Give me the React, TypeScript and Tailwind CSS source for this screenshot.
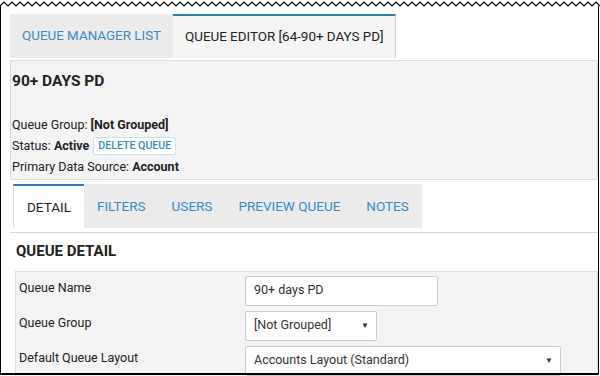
import React from "react";

const font = { fontFamily: "Roboto, 'Liberation Sans', sans-serif" };

function Zigzag() {
  // torn top edge of the screenshot
  let d = "M0 6";
  for (let x = 0; x < 600; x += 8) d += ` L${x + 4} 2 L${x + 8} 6`;
  return (
    <svg className="absolute left-0 top-0" width="600" height="10" viewBox="0 0 600 10">
      <path d={d} fill="none" stroke="#000" strokeWidth="1.2" />
    </svg>
  );
}

const subTabs = ["DETAIL", "FILTERS", "USERS", "PREVIEW QUEUE", "NOTES"];

export default function App() {
  return (
    <div className="relative w-[600px] h-[376px] overflow-hidden bg-white text-[#222]" style={font}>
      <Zigzag />
      <div className="absolute left-0 right-[1px] top-[6px] bottom-[1px] border-l border-r border-b-2 border-black" />

      <div className="pl-[10px] pr-[2px] pt-[14px]">
        {/* top tabs */}
        <div className="flex h-[44px]">
          <div className="flex items-center w-[163px] pl-[12px] bg-[#ebebeb] text-[13.4px] text-[#3a8ac6]">
            QUEUE MANAGER LIST
          </div>
          <div className="flex items-center w-[223px] pl-[12px] bg-[#f4f4f4] border-t-2 border-[#2b7bb9] border-r border-r-[#cfcfcf] text-[13.4px] text-[#222]">
            QUEUE EDITOR [64-90+ DAYS PD]
          </div>
        </div>

        {/* queue summary */}
        <div className="mt-[2px] h-[120px] bg-[#f4f4f4] border border-[#dcdcdc] pl-[1px]">
          <div className="mt-[10px] text-[15.5px] font-bold leading-[20px]">90+ DAYS PD</div>
          <div className="mt-[23px] text-[12.5px] leading-[21px]">
            <div>
              Queue Group: <span className="font-bold">[Not Grouped]</span>
            </div>
            <div className="flex items-center">
              Status:&nbsp;<span className="font-bold">Active</span>
              <span className="ml-[4px] h-[18px] px-[4px] flex items-center border border-[#c7def0] bg-white text-[10.6px] font-medium text-[#3a8ac6] rounded-[2px]">
                DELETE QUEUE
              </span>
            </div>
            <div>
              Primary Data Source: <span className="font-bold">Account</span>
            </div>
          </div>
        </div>

        {/* detail tabs */}
        <div className="mt-[4px] pl-[3px] border-b border-[#d6d6d6] pb-[4px]">
          <div className="flex h-[44px] w-fit bg-[#ebebeb]">
            {subTabs.map((t, i) => (
              <div
                key={t}
                className={
                  i === 0
                    ? "flex items-center whitespace-nowrap px-[13px] bg-white border-t-2 border-[#2b7bb9] border-l border-l-[#e0e0e0] text-[13.5px] text-[#222]"
                    : "flex items-center whitespace-nowrap px-[13px] text-[13.5px] text-[#3a8ac6]"
                }
              >
                {t}
              </div>
            ))}
          </div>
        </div>

        <div className="pl-[6px] pt-[8px] h-[38px] text-[15px] font-bold leading-[20px]">QUEUE DETAIL</div>

        {/* form */}
        <div className="ml-[5px] bg-[#f4f4f4] border border-[#dcdcdc] pt-[1px] pl-[3px] h-[110px]">
          {[
            { label: "Queue Name", w: "w-[193px]", value: "90+ days PD", select: false },
            { label: "Queue Group", w: "w-[132px]", value: "[Not Grouped]", select: true },
            { label: "Default Queue Layout", w: "w-[316px]", value: "Accounts Layout (Standard)", select: true },
          ].map((r) => (
            <div key={r.label} className="flex items-center h-[35px]">
              <div className="w-[226px] text-[12.5px] -mt-[4px]">{r.label}</div>
              <div
                className={`${r.w} h-[30px] flex items-center justify-between pl-[8px] pr-[7px] bg-white border border-[#cccccc] rounded-[2px] text-[12.5px] text-[#333]`}
              >
                <span>{r.value}</span>
                {r.select && <span className="text-[8px] text-[#333]">▼</span>}
              </div>
            </div>
          ))}
        </div>
      </div>
    </div>
  );
}
